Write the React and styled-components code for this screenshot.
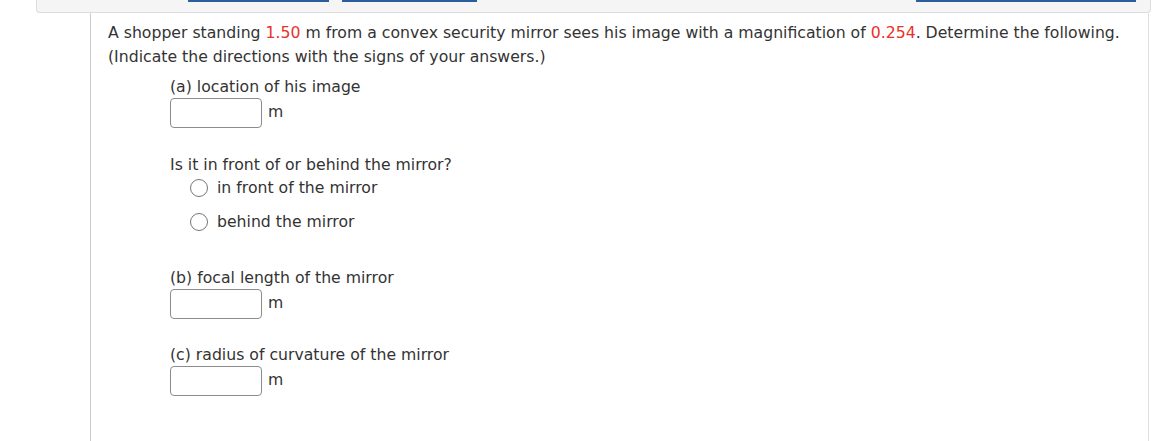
import React from 'react';
import styled, { createGlobalStyle } from 'styled-components';

const GlobalStyle = createGlobalStyle`
  html, body {
    margin: 0;
    padding: 0;
    background: #ffffff;
  }
  body {
    font-family: "DejaVu Sans", Verdana, sans-serif;
    color: #333333;
  }
`;

const Page = styled.div`
  width: 1170px;
  height: 441px;
  overflow: hidden;
`;

const Toolbar = styled.div`
  margin-left: 36px;
  width: 1113px;
  height: 12px;
  background: #f5f5f5;
  border: 1px solid #dddddd;
  border-top: none;
  border-bottom-left-radius: 4px;
  border-bottom-right-radius: 4px;
  display: flex;
  align-items: flex-start;
`;

const TabEdge = styled.div`
  height: 2px;
  width: ${p => p.$w}px;
  margin-left: ${p => p.$ml}px;
  background: #2b5e9c;
`;

const Question = styled.div`
  margin-left: 90px;
  width: 1059px;
  height: 428px;
  border-left: 1px solid #cccccc;
  border-right: 1px solid #e0e0e0;
  padding: 8px 0 0 17px;
  box-sizing: border-box;
`;

const Prompt = styled.p`
  margin: 0;
  font-size: 15.7px;
  line-height: 24px;
  white-space: nowrap;
`;

const Given = styled.span`
  color: #e8312a;
`;

const Part = styled.div`
  margin-left: 62px;
  margin-top: ${p => p.$mt}px;
`;

const Label = styled.div`
  font-size: 15.7px;
  line-height: 22px;
`;

const AnswerRow = styled.div`
  display: flex;
  align-items: center;
`;

const Field = styled.input`
  width: 92px;
  height: 30px;
  box-sizing: border-box;
  border: 1px solid #8c8c8c;
  border-radius: 4px;
  background: #ffffff;
  margin: 0;
  padding: 0 4px;
  font: inherit;
`;

const Unit = styled.span`
  font-size: 15.7px;
  margin-left: 6px;
  margin-top: -4px;
`;

const Choices = styled.div`
  margin-left: 20px;
  display: flex;
  flex-direction: column;
  gap: 12px;
  margin-top: 1px;
`;

const Choice = styled.label`
  display: flex;
  align-items: center;
  gap: 9px;
  font-size: 15.7px;
  line-height: 22px;
`;

const Radio = styled.span`
  width: 18px;
  height: 18px;
  box-sizing: border-box;
  border: 1.5px solid #777777;
  border-radius: 50%;
  display: inline-block;
`;

const Answer = () => (
  <AnswerRow>
    <Field type="text" />
    <Unit>m</Unit>
  </AnswerRow>
);

export default function App() {
  return (
    <Page>
      <GlobalStyle />
      <Toolbar>
        <TabEdge $ml={151} $w={141} />
        <TabEdge $ml={13} $w={135} />
        <TabEdge $ml={439} $w={220} />
      </Toolbar>
      <Question>
        <Prompt>
          A shopper standing <Given>1.50</Given> m from a convex security mirror sees his image with a
          magnification of <Given>0.254</Given>. Determine the following.
          <br />
          (Indicate the directions with the signs of your answers.)
        </Prompt>
        <Part $mt={7}>
          <Label>(a) location of his image</Label>
          <Answer />
        </Part>
        <Part $mt={26}>
          <Label>Is it in front of or behind the mirror?</Label>
          <Choices>
            <Choice><Radio />in front of the mirror</Choice>
            <Choice><Radio />behind the mirror</Choice>
          </Choices>
        </Part>
        <Part $mt={34}>
          <Label>(b) focal length of the mirror</Label>
          <Answer />
        </Part>
        <Part $mt={25}>
          <Label>(c) radius of curvature of the mirror</Label>
          <Answer />
        </Part>
      </Question>
    </Page>
  );
}
